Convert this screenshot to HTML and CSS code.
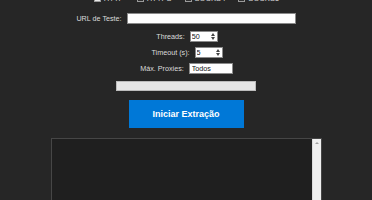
FILE: index.html
```html
<!DOCTYPE html>
<html lang="pt-BR">
<head>
    <meta charset="UTF-8">
    <meta name="viewport" content="width=device-width, initial-scale=1.0">
    <title>Extrator de Proxies</title>
    <link rel="stylesheet" href="styles.css">
</head>
<body>

    <div class="container">

        <!-- Protocol selection -->
        <div class="protocols">
            <label class="proto"><span class="check checked"></span>HTTP</label>
            <label class="proto"><span class="check"></span>HTTPS</label>
            <label class="proto"><span class="check"></span>SOCKS4</label>
            <label class="proto"><span class="check"></span>SOCKS5</label>
        </div>

        <!-- Test URL -->
        <div class="row row-url">
            <label for="testUrl">URL de Teste:</label>
            <input type="text" id="testUrl" class="text-input url-input" />
        </div>

        <!-- Threads -->
        <div class="row row-threads">
            <label for="threads">Threads:</label>
            <div class="spin">
                <input type="text" id="threads" value="50" />
                <span class="arrows"><span class="up"></span><span class="down"></span></span>
            </div>
        </div>

        <!-- Timeout -->
        <div class="row row-timeout">
            <label for="timeout">Timeout (s):</label>
            <div class="spin">
                <input type="text" id="timeout" value="5" />
                <span class="arrows"><span class="up"></span><span class="down"></span></span>
            </div>
        </div>

        <!-- Max proxies -->
        <div class="row row-max">
            <label for="maxProxies">Máx. Proxies:</label>
            <input type="text" id="maxProxies" class="text-input max-input" value="Todos" />
        </div>

        <!-- Progress -->
        <div class="progress"><div class="progress-fill" style="width: 0%"></div></div>

        <button class="btn">Iniciar Extração</button>

        <!-- Output log -->
        <div class="log">
            <div class="log-text"></div>
            <div class="scrollbar"><span class="scroll-up"></span></div>
        </div>
    </div>

</body>
</html>
```

FILE: styles.css
```css
body {
    font-family: "Liberation Sans", Arial, sans-serif;
    background-color: #262626;
    color: #dcdcdc;
    margin: 0;
    padding: 0;
    overflow: hidden;
}
.container {
    display: flex;
    flex-direction: column;
    align-items: center;
    font-size: 7.2px;
}
.protocols {
    display: flex;
    align-items: center;
    gap: 13px;
    height: 10px;
    margin-top: -7px;
    padding-left: 1px;
}
.proto {
    display: flex;
    align-items: center;
    font-size: 7.6px;
    color: #d8d8d8;
}
.check {
    width: 5px;
    height: 5px;
    border: 1px solid #9a9a9a;
    background-color: #2e2e2e;
    margin-right: 3px;
}
.check.checked {
    background-color: #e8e8e8;
}
.row {
    display: flex;
    align-items: center;
    gap: 5px;
}
.row label {
    color: #dcdcdc;
}
.row-url {
    margin-top: 10px;
}
.row-threads {
    margin-top: 7px;
    padding-left: 2px;
}
.row-timeout {
    margin-top: 5px;
    padding-left: 2px;
}
.row-max {
    margin-top: 5px;
    padding-left: 1px;
}
.text-input {
    box-sizing: border-box;
    height: 11px;
    padding: 0 2px;
    border: 1px solid #8a8a8a;
    background-color: #fff;
    font-family: inherit;
    font-size: 7.2px;
    color: #111;
    outline: none;
}
.url-input {
    width: 169px;
}
.max-input {
    width: 44px;
}
.spin {
    display: flex;
    align-items: center;
    box-sizing: border-box;
    width: 28px;
    height: 11px;
    border: 1px solid #8a8a8a;
    background-color: #fff;
}
.spin input {
    width: 100%;
    min-width: 0;
    border: none;
    padding: 0 1px;
    font-family: inherit;
    font-size: 7.2px;
    color: #111;
    background: transparent;
    outline: none;
}
.arrows {
    display: flex;
    flex-direction: column;
    gap: 1px;
    margin-right: 2px;
}
.up, .down {
    width: 0;
    height: 0;
    border-left: 2px solid transparent;
    border-right: 2px solid transparent;
}
.up {
    border-bottom: 3px solid #444;
}
.down {
    border-top: 3px solid #444;
}
.progress {
    box-sizing: border-box;
    width: 140px;
    height: 10px;
    margin-top: 7px;
    border: 1px solid #bcbcbc;
    background-color: #e6e6e6;
}
.progress-fill {
    height: 100%;
    background-color: #06b025;
}
.btn {
    width: 115px;
    height: 28px;
    margin-top: 9px;
    border: none;
    background-color: #0078d7;
    color: #fff;
    font-family: inherit;
    font-weight: bold;
    font-size: 9px;
    cursor: pointer;
}
.btn:hover {
    background-color: #1086e6;
}
.log {
    display: flex;
    box-sizing: border-box;
    width: 271px;
    height: 90px;
    margin-top: 10px;
    border: 1px solid #464646;
    background-color: #1f1f1f;
}
.log-text {
    flex: 1;
}
.scrollbar {
    width: 8px;
    display: flex;
    justify-content: center;
    background-color: #efefef;
    border-left: 1px solid #dcdcdc;
}
.scroll-up {
    width: 0;
    height: 0;
    margin-top: 3px;
    border-left: 2px solid transparent;
    border-right: 2px solid transparent;
    border-bottom: 2px solid #a0a0a0;
}
```
